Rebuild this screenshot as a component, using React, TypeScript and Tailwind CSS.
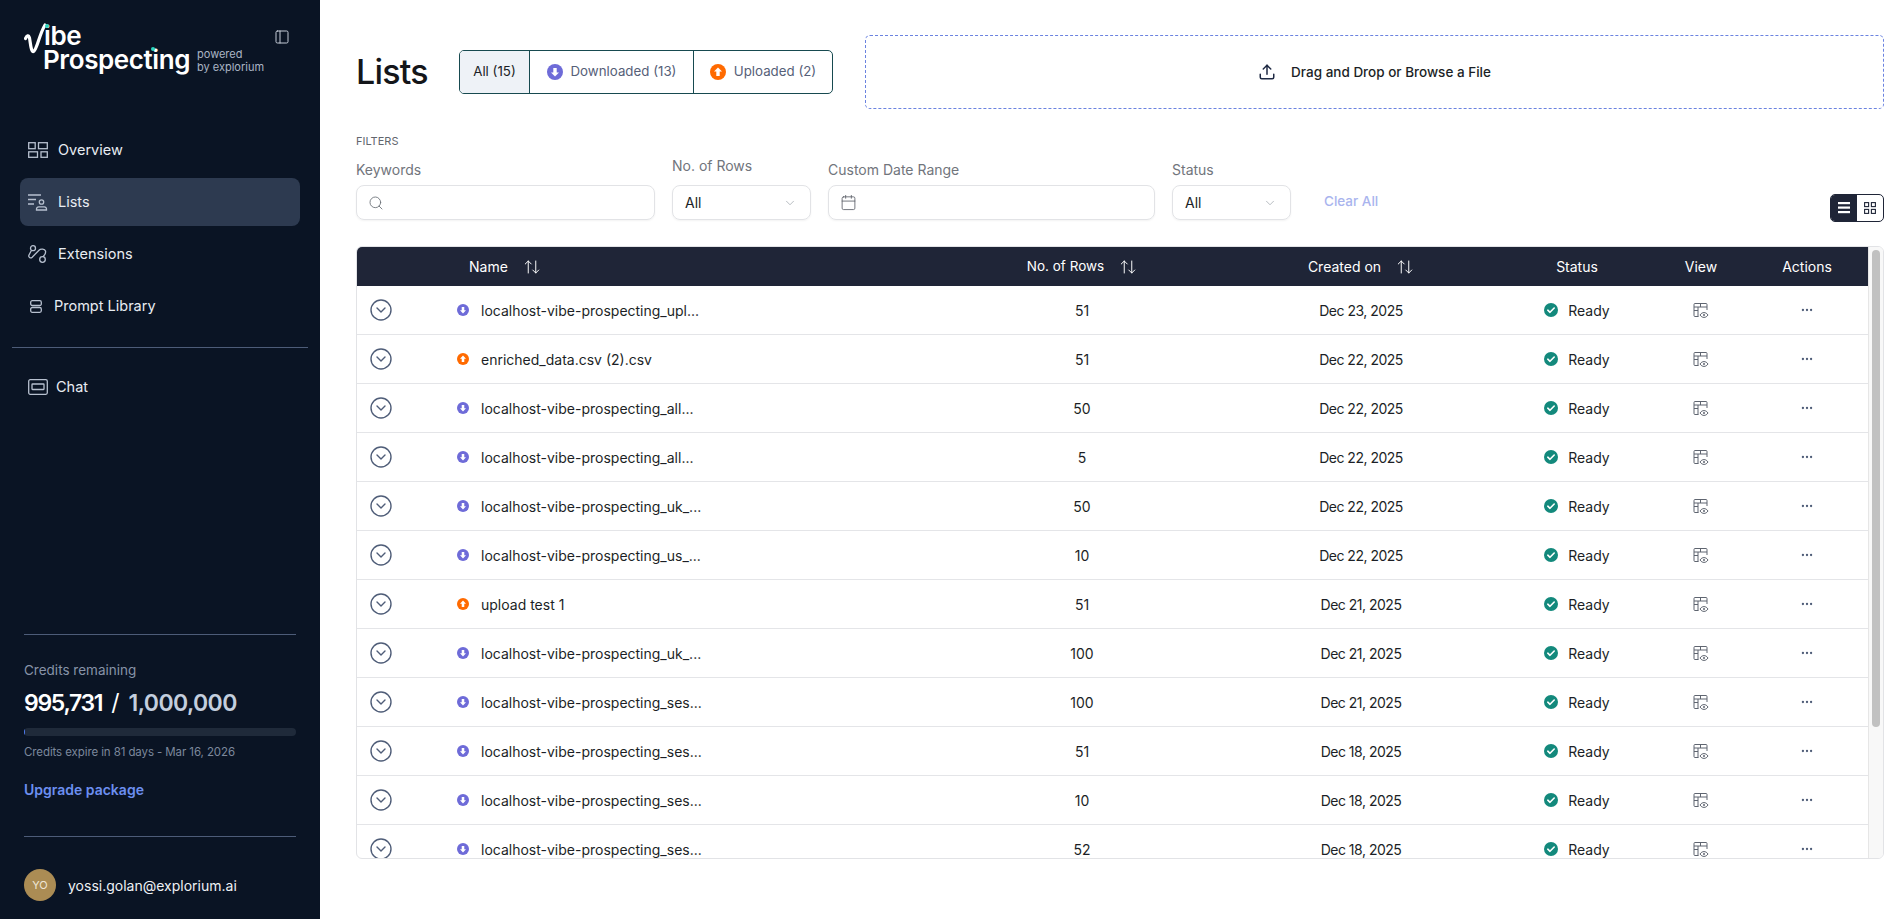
import type { ReactNode } from "react";
import { ArrowUpDown, Calendar, ChevronDown, CircleChevronDown, Ellipsis, PanelLeft, Search, Upload } from "lucide-react";

type Row = { name: string; up?: boolean; rows: string; date: string };

const rows: Row[] = [
  { name: "localhost-vibe-prospecting_upl...", rows: "51", date: "Dec 23, 2025" },
  { name: "enriched_data.csv (2).csv", up: true, rows: "51", date: "Dec 22, 2025" },
  { name: "localhost-vibe-prospecting_all...", rows: "50", date: "Dec 22, 2025" },
  { name: "localhost-vibe-prospecting_all...", rows: "5", date: "Dec 22, 2025" },
  { name: "localhost-vibe-prospecting_uk_...", rows: "50", date: "Dec 22, 2025" },
  { name: "localhost-vibe-prospecting_us_...", rows: "10", date: "Dec 22, 2025" },
  { name: "upload test 1", up: true, rows: "51", date: "Dec 21, 2025" },
  { name: "localhost-vibe-prospecting_uk_...", rows: "100", date: "Dec 21, 2025" },
  { name: "localhost-vibe-prospecting_ses...", rows: "100", date: "Dec 21, 2025" },
  { name: "localhost-vibe-prospecting_ses...", rows: "51", date: "Dec 18, 2025" },
  { name: "localhost-vibe-prospecting_ses...", rows: "10", date: "Dec 18, 2025" },
  { name: "localhost-vibe-prospecting_ses...", rows: "52", date: "Dec 18, 2025" },
];

const cols = "grid grid-cols-[94px_500px_262px_296px_136px_112px_100px] items-center";

function ArrowBadge({ up, size }: { up?: boolean; size: number }) {
  return (
    <svg width={size} height={size} viewBox="0 0 16 16" className="shrink-0">
      <circle cx="8" cy="8" r="8" fill={up ? "#ff6a00" : "#6e6bd8"} />
      {up ? (
        <path d="M8 3.4 12 7.6H9.7V12H6.3V7.6H4Z" fill="#fff" />
      ) : (
        <path d="M8 12.6 12 8.4H9.7V4H6.3V8.4H4Z" fill="#fff" />
      )}
    </svg>
  );
}

function ReadyIcon() {
  return (
    <svg width="14" height="14" viewBox="0 0 14 14" className="shrink-0">
      <circle cx="7" cy="7" r="7" fill="#13897c" />
      <path d="M3.8 7.2 6 9.3 10.2 5" fill="none" stroke="#fff" strokeWidth="1.6" strokeLinecap="round" strokeLinejoin="round" />
    </svg>
  );
}

function ViewIcon() {
  return (
    <svg width="16" height="16" viewBox="0 0 16 16" fill="none" stroke="#5f6570" strokeWidth="1">
      <path d="M5.5 14.5H2a1 1 0 0 1-1-1v-11a1 1 0 0 1 1-1h11a1 1 0 0 1 1 1v5.5" />
      <path d="M1 5h13M5 5v9.5M7.5 1.5V5M1 8.5h4" />
      <path d="M7 13c1.1-1.6 2.4-2.4 4-2.4s2.9.8 4 2.4c-1.1 1.6-2.4 2.4-4 2.4S8.1 14.6 7 13Z" fill="#fff" />
      <circle cx="11" cy="13" r="1" fill="#5f6570" stroke="none" />
    </svg>
  );
}

function Logo() {
  return (
    <div className="flex items-end">
      <div className="relative h-[56px] w-[173px] text-white font-semibold tracking-[-0.4px]">
        <svg width="34" height="32" viewBox="0 0 34 32" fill="none" className="absolute left-0 top-0">
          <path d="M1.5 15.5C3 12.5 4.5 11.5 5.5 15C6.5 20 7 29 9.5 28.5C13 27 15 12 21 2" stroke="#fff" strokeWidth="3.2" strokeLinecap="round" />
        </svg>
        <span className="absolute left-[20px] top-[1px] text-[26px] leading-[24px]">ibe</span>
        <span className="absolute left-[19px] top-[25px] text-[26px] leading-[24px]">Prospecting</span>
        <span className="absolute left-[21px] top-[1px] h-[4px] w-[4px] rounded-full bg-[#2dd4bf]" />
        <span className="absolute left-[127px] top-[24px] h-[4px] w-[4px] rounded-full bg-[#2dd4bf]" />
      </div>
      <div className="mb-[5px] text-[11px] leading-[13px] text-[#aab4c4]">
        <div>powered</div>
        <div>by explorium</div>
      </div>
    </div>
  );
}

function NavItem({ icon, label, active, gap = "gap-[10px]" }: { icon: ReactNode; label: string; active?: boolean; gap?: string }) {
  return (
    <div className={`mx-5 flex h-[48px] items-center rounded-lg px-2 text-[14.5px] text-[#e8ecf2] ${gap} ${active ? "bg-[#2d3a50]" : ""}`}>
      {icon}
      <span>{label}</span>
    </div>
  );
}

const iconStroke = { fill: "none", stroke: "#b7c0cf", strokeWidth: 1.3 };

function Sidebar() {
  return (
    <aside className="flex h-[919px] w-[320px] shrink-0 flex-col bg-[#0a1424]">
      <div className="relative h-[104px] pl-[24px] pt-[23px]">
        <Logo />
        <PanelLeft size={16} strokeWidth={1.5} className="absolute left-[274px] top-[29px] text-[#c4cbd6]" />
      </div>
      <nav className="mt-[22px] flex flex-col gap-[4px]">
        <NavItem
          label="Overview"
          icon={
            <svg width="20" height="16" viewBox="0 0 20 16" {...iconStroke}>
              <rect x="0.7" y="0.7" width="6.5" height="6" />
              <rect x="10.5" y="0.7" width="8.8" height="6" />
              <rect x="0.7" y="9.8" width="8.8" height="5.5" />
              <rect x="13" y="9.8" width="6.3" height="5.5" />
            </svg>
          }
        />
        <NavItem
          active
          label="Lists"
          icon={
            <svg width="20" height="17" viewBox="0 0 20 17" {...iconStroke}>
              <path d="M0 1h13M0 5.5h8M0 10h6" />
              <circle cx="13.5" cy="8" r="2.2" />
              <path d="M8.5 16v-1a2.2 2.2 0 0 1 2.2-2.2h5.6a2.2 2.2 0 0 1 2.2 2.2v1z" />
            </svg>
          }
        />
        <NavItem
          label="Extensions"
          icon={
            <svg width="20" height="18" viewBox="0 0 20 18" {...iconStroke}>
              <circle cx="5" cy="3.2" r="2.5" />
              <circle cx="14.5" cy="14.5" r="2.8" />
              <path d="M3.5 5.2 1 10c-1 2.2 1.5 3.800 3.200 2.200L11 5.200c1.800-1.800 5.800-1.200 6.500 0.800.5 2-.8 4-2.500 5.700" />
            </svg>
          }
        />
        <NavItem
          label="Prompt Library"
          gap="gap-[14px]"
          icon={
            <svg width="12" height="13" viewBox="0 0 12 13" {...iconStroke} className="ml-[2px] mr-[-2px]">
              <rect x="0.7" y="0.7" width="10.6" height="4.8" rx="1.5" />
              <rect x="0.7" y="7.5" width="10.6" height="4.8" rx="1.5" />
            </svg>
          }
        />
      </nav>
      <div className="mx-3 mt-[17px] h-px bg-[#4d5c78]" />
      <div className="mt-[15px]">
        <NavItem
          label="Chat"
          gap="gap-[8px]"
          icon={
            <svg width="20" height="16" viewBox="0 0 20 16" {...iconStroke}>
              <rect x="0.7" y="0.7" width="18.6" height="14.6" rx="1.5" />
              <rect x="4" y="5" width="12" height="5.5" rx="0.5" />
            </svg>
          }
        />
      </div>
      <div className="mt-auto px-6">
        <div className="h-px bg-[#4d5c78]" />
        <div className="mt-[26px] text-[13.5px] leading-[18px] text-[#8793a8]">Credits remaining</div>
        <div className="mt-[9px] whitespace-nowrap text-[23px] leading-[30px] text-white">
          <span className="font-semibold tracking-[-1.3px]">995,731</span>
          <span className="mx-[9px] font-normal">/</span>
          <span className="font-semibold tracking-[-0.6px] text-[#c3cede]">1,000,000</span>
        </div>
        <div className="mt-[10px] h-[8px] overflow-hidden rounded-full bg-[#1f2a3a]">
          <div className="h-full w-px bg-[#4f7cf0]" />
        </div>
        <div className="mt-[8px] text-[11.5px] leading-[16px] tracking-[-0.1px] text-[#7c889c]">Credits expire in 81 days - Mar 16, 2026</div>
        <div className="mt-[21px] text-[14px] font-semibold leading-[18px] text-[#6c8ff0]">Upgrade package</div>
        <div className="mt-[37px] h-px bg-[#4d5c78]" />
        <div className="flex h-[82px] items-center gap-[12px] pt-[14px]">
          <div className="flex h-[32px] w-[32px] items-center justify-center rounded-full bg-[#ab8c54] text-[11px] text-[#efe6d5]">YO</div>
          <span className="text-[14px] text-[#eef1f5]">yossi.golan@explorium.ai</span>
        </div>
      </div>
    </aside>
  );
}

function Label({ children, className = "" }: { children: ReactNode; className?: string }) {
  return <div className={`text-[14px] leading-[18px] text-[#71757c] ${className}`}>{children}</div>;
}

function Select({ width }: { width: string }) {
  return (
    <div className={`flex h-[35px] items-center justify-between rounded-lg border border-[#e2e3e6] pl-3 pr-[13px] text-[14px] text-[#1c1f26] shadow-[0_1px_2px_rgba(0,0,0,0.05)] ${width}`}>
      <span>All</span>
      <ChevronDown size={14} strokeWidth={1.2} className="text-[#9aa0a8]" />
    </div>
  );
}

function Tab({ label, badge, active, last }: { label: string; badge?: "up" | "down"; active?: boolean; last?: boolean }) {
  return (
    <div className={`flex h-full items-center justify-center gap-[8px] text-[13.3px] ${last ? "" : "border-r border-[#174a50]"} ${active ? "w-[70px] bg-[#eef2f7] text-[#1c1f26]" : "text-[#566078]"} ${badge === "down" ? "w-[164px]" : ""} ${badge === "up" ? "flex-1" : ""}`}>
      {badge ? <ArrowBadge size={16} up={badge === "up"} /> : null}
      <span>{label}</span>
    </div>
  );
}

export default function App() {
  return (
    <div className="flex h-[919px] w-[1903px] overflow-hidden bg-white font-['Inter','Liberation_Sans',sans-serif]">
      <Sidebar />
      <main className="flex min-w-0 flex-1 flex-col pl-[36px] pr-[19px]">
        <div className="mt-[35px] flex h-[74px] items-center">
          <h1 className="w-[103px] text-[34px] font-medium leading-[40px] tracking-[-0.8px] text-[#14161a]">Lists</h1>
          <div className="flex h-[44px] w-[374px] overflow-hidden rounded-[5px] border border-[#174a50]">
            <Tab label="All (15)" active />
            <Tab label="Downloaded (13)" badge="down" />
            <Tab label="Uploaded (2)" badge="up" last />
          </div>
          <div className="ml-[32px] flex h-[74px] flex-1 items-center justify-center gap-[15px] rounded-[5px] border border-dashed border-[#6b83e0] text-[13.5px] font-medium text-[#1c1f26]">
            <Upload size={18} strokeWidth={2} className="text-[#1f2a44]" />
            <span>Drag and Drop or Browse a File</span>
          </div>
        </div>
        <div className="mt-[25px] text-[11px] leading-[14px] text-[#62666d]">FILTERS</div>
        <div className="flex items-start">
          <div className="w-[316px]">
            <Label className="mb-[6px] mt-[13px]">Keywords</Label>
            <div className="flex h-[35px] w-[299px] items-center rounded-lg border border-[#e2e3e6] pl-[11px] text-[#6a6f76] shadow-[0_1px_2px_rgba(0,0,0,0.05)]">
              <Search size={16} strokeWidth={1.3} />
            </div>
          </div>
          <div className="w-[156px]">
            <Label className="mb-[10px] mt-[9px]">No. of Rows</Label>
            <Select width="w-[139px]" />
          </div>
          <div className="w-[344px]">
            <Label className="mb-[6px] mt-[13px]">Custom Date Range</Label>
            <div className="flex h-[35px] w-[327px] items-center rounded-lg border border-[#e2e3e6] pl-[11px] text-[#5c6068] shadow-[0_1px_2px_rgba(0,0,0,0.05)]">
              <Calendar size={17} strokeWidth={1.2} />
            </div>
          </div>
          <div className="w-[152px]">
            <Label className="mb-[6px] mt-[13px]">Status</Label>
            <Select width="w-[119px]" />
          </div>
          <div className="mt-[44px] text-[13.5px] font-medium leading-[18px] text-[#a9b4ee]">Clear All</div>
          <div className="ml-auto mt-[46px] flex h-[28px] w-[54px] overflow-hidden rounded-[5px] border border-[#1f2537]">
            <div className="flex w-[26px] items-center justify-center bg-[#1f2537]">
              <svg width="12" height="12" viewBox="0 0 12 12" fill="#fff">
                <rect y="0" width="12" height="2.2" />
                <rect y="4.5" width="12" height="2.2" />
                <rect y="9" width="12" height="2.2" />
              </svg>
            </div>
            <div className="flex flex-1 items-center justify-center">
              <svg width="12" height="12" viewBox="0 0 12 12" fill="none" stroke="#1f2537" strokeWidth="1.1">
                <rect x="0.6" y="0.6" width="4" height="4" />
                <rect x="7.4" y="0.6" width="4" height="4" />
                <rect x="0.6" y="7.4" width="4" height="4" />
                <rect x="7.4" y="7.4" width="4" height="4" />
              </svg>
            </div>
          </div>
        </div>
        <div className="mt-[24px] flex h-[613px] overflow-hidden rounded-[6px] border border-[#e2e3e6]">
          <div className="min-w-0 flex-1 overflow-hidden">
            <div className={`${cols} h-[39px] bg-[#1f2537] text-[14px] text-white`}>
              <div />
              <div className="flex items-center gap-[15px] pl-[18px]">
                Name <ArrowUpDown size={18} strokeWidth={1.3} />
              </div>
              <div className="flex items-center justify-center gap-[15px]">
                <span className="text-[13.5px]">No. of Rows</span> <ArrowUpDown size={18} strokeWidth={1.3} />
              </div>
              <div className="flex items-center justify-center gap-[15px]">
                Created on <ArrowUpDown size={18} strokeWidth={1.3} />
              </div>
              <div className="text-center">Status</div>
              <div className="text-center">View</div>
              <div className="text-center">Actions</div>
            </div>
            {rows.map((r, i) => (
              <div key={i} className={`${cols} h-[49px] border-b border-[#e4e5e8] text-[14px] text-[#1c1f26]`}>
                <div className="pl-[12px]">
                  <CircleChevronDown size={24} strokeWidth={1.4} className="text-[#4f5d78]" />
                </div>
                <div className="flex items-center gap-[12px] pl-[6px]">
                  <ArrowBadge size={12} up={r.up} />
                  <span>{r.name}</span>
                </div>
                <div className="text-center">{r.rows}</div>
                <div className="text-center tracking-[-0.5px]">{r.date}</div>
                <div className="flex items-center justify-center gap-[10px]">
                  <ReadyIcon />
                  <span>Ready</span>
                </div>
                <div className="flex justify-center">
                  <ViewIcon />
                </div>
                <div className="flex justify-center">
                  <Ellipsis size={14} className="text-[#4f5d78]" />
                </div>
              </div>
            ))}
          </div>
          <div className="w-[15px] shrink-0 border-l border-[#e6e6e6] bg-[#f8f8f8] px-[3px] pt-[3px]">
            <div className="h-[477px] rounded-full bg-[#c1c1c1]" />
          </div>
        </div>
      </main>
    </div>
  );
}
